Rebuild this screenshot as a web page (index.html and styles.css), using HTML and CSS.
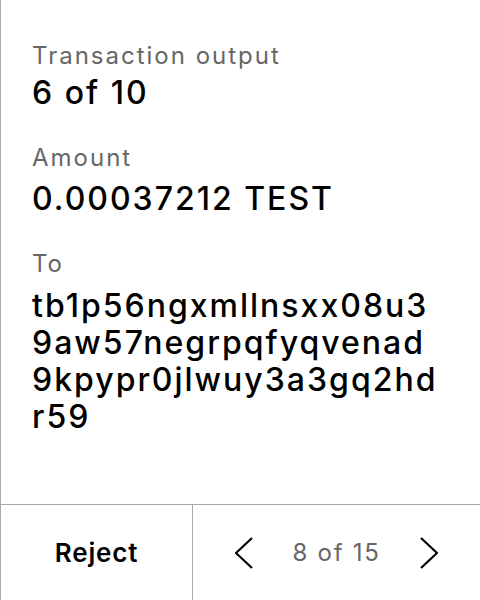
FILE: index.html
```html
<!DOCTYPE html>
<html>
<head>
<meta charset="utf-8">
<link rel="stylesheet" href="styles.css">
</head>
<body>
<div class="screen">
  <div class="content">
    <div class="field first">
      <div class="label">Transaction output</div>
      <div class="value">6 of 10</div>
    </div>
    <div class="field">
      <div class="label">Amount</div>
      <div class="value">0.00037212 TEST</div>
    </div>
    <div class="field">
      <div class="label">To</div>
      <div class="value address">tb1p56ngxmllnsxx08u3<br>9aw57negrpqfyqvenad<br>9kpypr0jlwuy3a3gq2hd<br>r59</div>
    </div>
  </div>
  <div class="footer">
    <div class="reject">Reject</div>
    <div class="pager">
      <svg class="chev" width="18" height="32" viewBox="0 0 18 32"><polyline points="17,1 1,16 17,31" fill="none" stroke="#000" stroke-width="2.2"/></svg>
      <span class="count">8 of 15</span>
      <svg class="chev" width="18" height="32" viewBox="0 0 18 32"><polyline points="1,1 17,16 1,31" fill="none" stroke="#000" stroke-width="2.2"/></svg>
    </div>
  </div>
</div>
</body>
</html>
```
FILE: styles.css
```css
html, body {
  margin: 0;
  padding: 0;
  background: #fff;
}
.screen {
  width: 480px;
  height: 600px;
  box-sizing: border-box;
  border-left: 1px solid #a9a9a9;
  display: flex;
  flex-direction: column;
  font-family: Inter, "Noto Sans", sans-serif;
  color: #000;
}
.content {
  flex: 1;
  padding: 41px 10px 0 31px;
  display: flex;
  flex-direction: column;
  gap: 32px;
}
.field {
  display: flex;
  flex-direction: column;
  gap: 8px;
}
.field.first {
  gap: 4px;
}
.label {
  font-size: 24px;
  line-height: 29px;
  letter-spacing: 2px;
  color: #666;
}
.value {
  font-size: 32px;
  line-height: 37px;
  font-weight: 500;
  letter-spacing: 2px;
}
.address {
  margin-top: 1px;
  white-space: nowrap;
}
.footer {
  height: 96px;
  box-sizing: border-box;
  border-top: 1px solid #a9a9a9;
  display: flex;
}
.reject {
  width: 191px;
  border-right: 1px solid #a9a9a9;
  display: flex;
  align-items: center;
  justify-content: center;
  font-size: 26px;
  font-weight: 600;
  letter-spacing: 0.8px;
}
.pager {
  flex: 1;
  display: flex;
  align-items: center;
  justify-content: center;
  gap: 40px;
}
.count {
  font-size: 24px;
  letter-spacing: 1.7px;
  color: #666;
}
.chev {
  display: block;
}
```
